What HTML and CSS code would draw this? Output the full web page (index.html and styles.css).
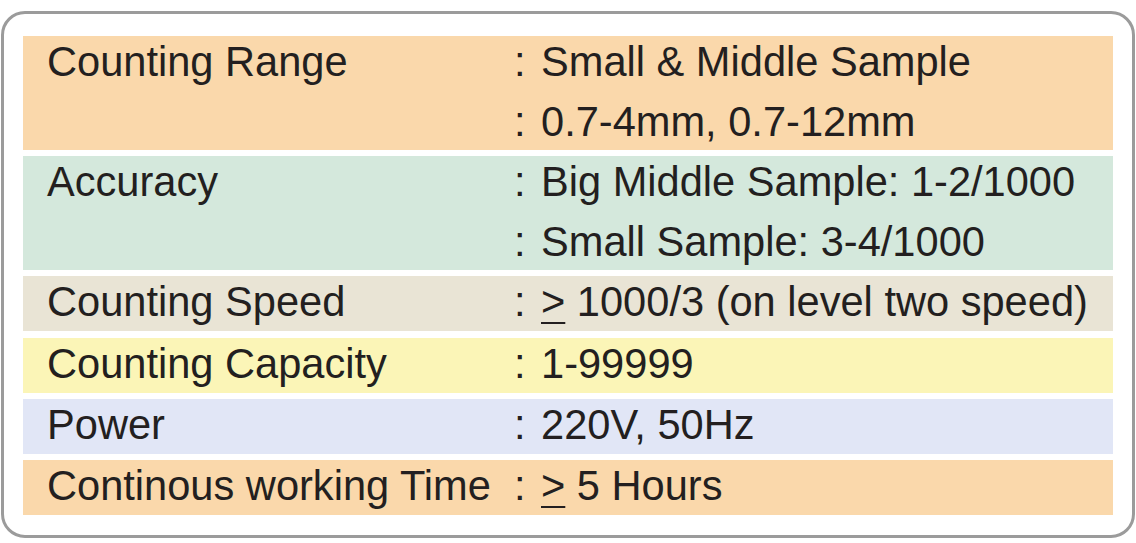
FILE: index.html
```html
<!DOCTYPE html>
<html>
<head>
<meta charset="utf-8">
<link rel="stylesheet" href="styles.css">
</head>
<body>
<div class="box">
  <div class="spec double orange">
    <div class="label">Counting Range</div>
    <div class="colon">:</div><div class="value">Small &amp; Middle Sample</div>
    <div class="colon">:</div><div class="value">0.7-4mm, 0.7-12mm</div>
  </div>
  <div class="spec double green">
    <div class="label">Accuracy</div>
    <div class="colon">:</div><div class="value">Big Middle Sample: 1-2/1000</div>
    <div class="colon">:</div><div class="value">Small Sample: 3-4/1000</div>
  </div>
  <div class="spec single beige">
    <div class="label">Counting Speed</div>
    <div class="colon">:</div><div class="value"><span class="ge">&gt;</span> 1000/3 (on level two speed)</div>
  </div>
  <div class="spec single yellow">
    <div class="label">Counting Capacity</div>
    <div class="colon">:</div><div class="value">1-99999</div>
  </div>
  <div class="spec single blue">
    <div class="label">Power</div>
    <div class="colon">:</div><div class="value">220V, 50Hz</div>
  </div>
  <div class="spec single orange">
    <div class="label">Continous working Time</div>
    <div class="colon">:</div><div class="value"><span class="ge">&gt;</span> 5 Hours</div>
  </div>
</div>
</body>
</html>
```

FILE: styles.css
```css
html, body {
  margin: 0;
  padding: 0;
  background: #ffffff;
}
body {
  font-family: "Liberation Sans", Arial, sans-serif;
  color: #231f20;
}
.box {
  box-sizing: border-box;
  margin: 11px 0 0 1px;
  width: 1134px;
  height: 527px;
  border: 3px solid #9b9b9b;
  border-radius: 24px;
  padding: 22px 19px 20px 19px;
  display: flex;
  flex-direction: column;
  gap: 6.2px;
}
.spec {
  display: grid;
  grid-template-columns: 465px 29px 1fr;
  grid-auto-rows: 52px;
  row-gap: 8px;
  padding-left: 24px;
  font-size: 41.6px;
  line-height: 52px;
  white-space: nowrap;
}
.single { height: 55px; }
.double { height: 114px; }
.label { grid-column: 1; grid-row: 1; }
.colon { grid-column: 2; padding-left: 2px; }
.value { grid-column: 3; }
.double .colon:nth-of-type(4), .double .value:nth-of-type(5) { grid-row: 2; }
.ge { text-decoration: underline; text-decoration-thickness: 2px; text-underline-offset: 6px; }
.orange { background: #fad8ab; }
.green { background: #d4e8dc; }
.beige { background: #e9e4d5; }
.yellow { background: #fbf5b7; }
.blue { background: #e1e6f6; }
```
